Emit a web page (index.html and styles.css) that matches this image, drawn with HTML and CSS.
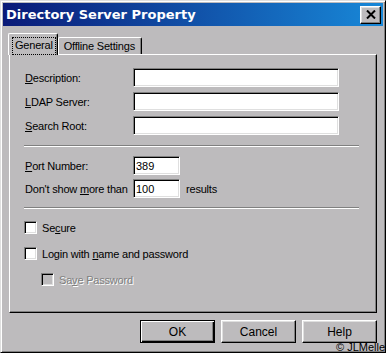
FILE: index.html
```html
<!DOCTYPE html>
<html lang="en">
<head>
    <meta charset="UTF-8">
    <meta name="viewport" content="width=device-width, initial-scale=1.0">
    <title>Directory Server Property</title>
    <link rel="stylesheet" href="styles.css">
</head>
<body>
    <div class="window">
        <!-- Title bar -->
        <div class="titlebar">
            <span class="title">Directory Server Property</span>
            <button class="close-btn" aria-label="Close">
                <svg width="10" height="9" viewBox="0 0 10 9">
                    <path d="M1 0.5 L9 8.5 M9 0.5 L1 8.5" stroke="#000" stroke-width="2"/>
                </svg>
            </button>
        </div>

        <!-- Tabs -->
        <div class="tabs">
            <div class="tab tab-active"><span class="focus">General</span></div>
            <div class="tab">Offline Settings</div>
        </div>

        <div class="panel">
            <div class="form-grid">
                <label for="desc"><u>D</u>escription:</label>
                <input type="text" id="desc" class="field wide">
                <label for="ldap"><u>L</u>DAP Server:</label>
                <input type="text" id="ldap" class="field wide">
                <label for="root"><u>S</u>earch Root:</label>
                <input type="text" id="root" class="field wide">
            </div>

            <div class="separator"></div>

            <div class="form-grid small-gap">
                <label for="port"><u>P</u>ort Number:</label>
                <input type="text" id="port" class="field short" value="389">
                <label for="max">Don't show <u>m</u>ore than</label>
                <div class="inline">
                    <input type="text" id="max" class="field short" value="100">
                    <span class="after">results</span>
                </div>
            </div>

            <div class="separator second"></div>

            <div class="checks">
                <label class="check"><span class="box"></span><span>Se<u>c</u>ure</span></label>
                <label class="check"><span class="box"></span><span>Login with <u>n</u>ame and password</span></label>
                <label class="check indent disabled"><span class="box"></span><span>Sa<u>v</u>e Password</span></label>
            </div>
        </div>

        <div class="buttons">
            <button class="btn btn-default">OK</button>
            <button class="btn">Cancel</button>
            <button class="btn">Help</button>
        </div>

        <div class="credit">&copy; JLMeller</div>
    </div>
</body>
</html>
```

FILE: styles.css
```css
body {
    margin: 0;
    background: #bdbbbd;
}
.window {
    position: relative;
    width: 386px;
    height: 353px;
    box-sizing: border-box;
    padding: 2px;
    background: #bdbbbd;
    border: 1px solid;
    border-color: #dfdfdf #000 #000 #dfdfdf;
    box-shadow: inset 1px 1px #fff, inset -1px -1px #808080;
    overflow: hidden;
    font-family: "Liberation Sans", Arial, sans-serif;
    font-size: 11px;
    letter-spacing: -0.2px;
    color: #000;
}
.titlebar {
    height: 23px;
    display: flex;
    align-items: center;
    justify-content: space-between;
    padding-left: 3px;
    background: linear-gradient(to right, #0a1a78, #1888d8);
}
.title {
    font-family: "DejaVu Sans", Verdana, sans-serif;
    font-weight: bold;
    font-size: 13px;
    letter-spacing: 0;
    color: #fff;
}
.close-btn {
    width: 21px;
    height: 18px;
    margin-right: 2px;
    padding: 0;
    display: flex;
    align-items: center;
    justify-content: center;
    background: #bdbbbd;
    border: 1px solid;
    border-color: #fff #000 #000 #fff;
    box-shadow: inset -1px -1px #808080, inset 1px 1px #dfdfdf;
}
.tabs {
    display: flex;
    align-items: flex-end;
    height: 21px;
    margin: 7px 0 0 5px;
}
.tab {
    height: 17px;
    box-sizing: border-box;
    padding: 0 6px 0 5px;
    line-height: 16px;
    border: 1px solid #fff;
    border-right: 1px solid #000;
    border-bottom: none;
    border-radius: 2px 2px 0 0;
    box-shadow: inset -1px 0 #808080;
}
.tab-active {
    position: relative;
    z-index: 1;
    height: 22px;
    margin-bottom: -1px;
    padding: 3px 1px 0 3px;
    background: #bdbbbd;
}
.focus {
    display: block;
    height: 16px;
    padding: 0 2px;
    line-height: 15px;
    border: 1px dotted #000;
}
.panel {
    width: 368px;
    height: 259px;
    box-sizing: border-box;
    margin-left: 6px;
    padding: 13px 0 0 15px;
    border: 1px solid;
    border-color: #fff #000 #000 #fff;
    box-shadow: inset -1px -1px #808080;
}
.form-grid {
    display: grid;
    grid-template-columns: 108px auto;
    row-gap: 5px;
    align-items: center;
}
.form-grid label {
    white-space: nowrap;
}
.small-gap {
    row-gap: 4px;
    margin-top: 9px;
}
.field {
    height: 19px;
    box-sizing: border-box;
    margin: 0;
    padding: 1px 2px 0;
    font: inherit;
    background: #fff;
    border: 1px solid;
    border-color: #808080 #fff #fff #808080;
    box-shadow: inset 1px 1px #000, inset -1px -1px #dfdfdf;
    outline: none;
}
.wide {
    width: 206px;
}
.short {
    width: 47px;
}
.inline {
    display: flex;
    align-items: center;
}
.after {
    margin-left: 6px;
}
.separator {
    width: 335px;
    margin: 10px 0 0 -1px;
    border-top: 1px solid #808080;
    border-bottom: 1px solid #fff;
}
.second {
    margin-top: 9px;
}
.checks {
    display: flex;
    flex-direction: column;
    gap: 13px;
    margin-top: 12px;
}
.check {
    display: flex;
    align-items: center;
    height: 13px;
    margin-left: -1px;
    white-space: nowrap;
}
.box {
    width: 13px;
    height: 13px;
    box-sizing: border-box;
    margin-right: 5px;
    background: #fff;
    border: 1px solid;
    border-color: #808080 #fff #fff #808080;
    box-shadow: inset 1px 1px #000, inset -1px -1px #dfdfdf;
}
.indent {
    margin-left: 16px;
}
.disabled {
    color: #808080;
    text-shadow: 1px 1px 0 #fff;
}
.disabled .box {
    background: #bdbbbd;
}
.buttons {
    display: flex;
    justify-content: flex-end;
    gap: 6px;
    margin: 7px 6px 0 0;
}
.btn {
    width: 75px;
    height: 23px;
    padding: 0;
    font: inherit;
    font-size: 12px;
    color: #000;
    background: #bdbbbd;
    border: 1px solid;
    border-color: #fff #000 #000 #fff;
    box-shadow: inset -1px -1px #808080, inset 1px 1px #dfdfdf;
}
.btn-default {
    border: 1px solid #000;
    box-shadow: inset 1px 1px #fff, inset -1px -1px #000, inset -2px -2px #808080;
}
.credit {
    position: absolute;
    left: 335px;
    top: 340px;
    font-size: 11px;
    letter-spacing: 0;
    white-space: nowrap;
}
```
